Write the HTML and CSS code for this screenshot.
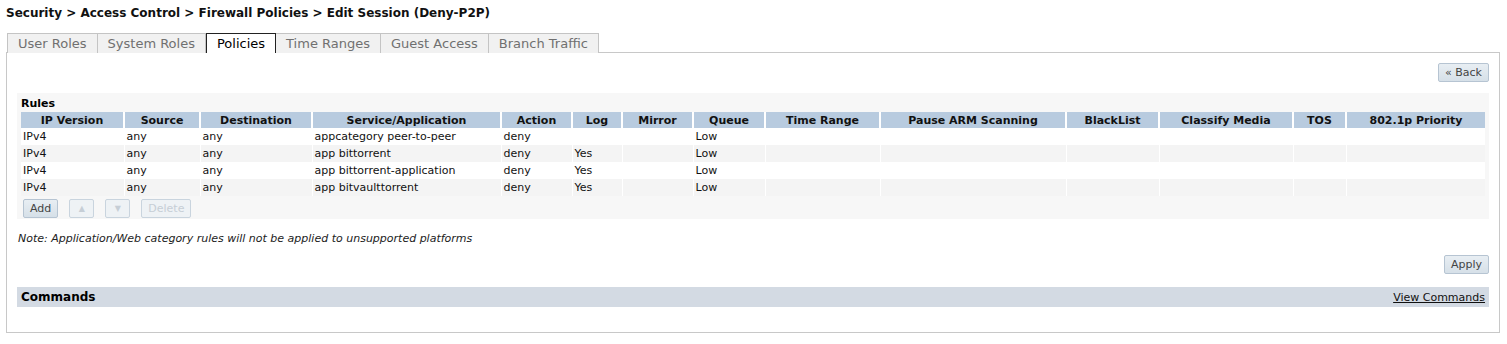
FILE: index.html
```html
<!DOCTYPE html>
<html lang="en">
<head>
  <meta charset="UTF-8">
  <title>Edit Session (Deny-P2P)</title>
  <link rel="stylesheet" href="styles.css">
</head>
<body>
  <h1 class="crumbs">Security &gt; Access Control &gt; Firewall Policies &gt; Edit Session (Deny-P2P)</h1>

  <div class="tabs">
    <div class="tab">User Roles</div>
    <div class="tab">System Roles</div>
    <div class="tab active">Policies</div>
    <div class="tab">Time Ranges</div>
    <div class="tab">Guest Access</div>
    <div class="tab">Branch Traffic</div>
  </div>

  <div class="panel">
    <div class="actions">
      <button class="btn">&laquo; Back</button>
    </div>

    <div class="rules">
      <h2>Rules</h2>
      <table class="grid">
        <colgroup>
          <col class="c-ip"><col class="c-src"><col class="c-dst"><col class="c-svc">
          <col class="c-act"><col class="c-log"><col class="c-mir"><col class="c-que">
          <col class="c-time"><col class="c-arm"><col class="c-bl"><col class="c-cm">
          <col class="c-tos"><col class="c-pri">
        </colgroup>
        <thead>
          <tr>
            <th>IP Version</th>
            <th>Source</th>
            <th>Destination</th>
            <th>Service/Application</th>
            <th>Action</th>
            <th>Log</th>
            <th>Mirror</th>
            <th>Queue</th>
            <th>Time Range</th>
            <th>Pause ARM Scanning</th>
            <th>BlackList</th>
            <th>Classify Media</th>
            <th>TOS</th>
            <th>802.1p Priority</th>
          </tr>
        </thead>
        <tbody>
          <tr>
            <td>IPv4</td><td>any</td><td>any</td><td>appcategory peer-to-peer</td><td>deny</td><td></td><td></td><td>Low</td><td></td><td></td><td></td><td></td><td></td><td></td>
          </tr>
          <tr>
            <td>IPv4</td><td>any</td><td>any</td><td>app bittorrent</td><td>deny</td><td>Yes</td><td></td><td>Low</td><td></td><td></td><td></td><td></td><td></td><td></td>
          </tr>
          <tr>
            <td>IPv4</td><td>any</td><td>any</td><td>app bittorrent-application</td><td>deny</td><td>Yes</td><td></td><td>Low</td><td></td><td></td><td></td><td></td><td></td><td></td>
          </tr>
          <tr>
            <td>IPv4</td><td>any</td><td>any</td><td>app bitvaulttorrent</td><td>deny</td><td>Yes</td><td></td><td>Low</td><td></td><td></td><td></td><td></td><td></td><td></td>
          </tr>
        </tbody>
      </table>
      <div class="row-buttons">
        <button class="btn">Add</button>
        <button class="btn disabled">&#9650;</button>
        <button class="btn disabled">&#9660;</button>
        <button class="btn disabled">Delete</button>
      </div>
    </div>

    <p class="note">Note: Application/Web category rules will not be applied to unsupported platforms</p>

    <div class="actions apply">
      <button class="btn">Apply</button>
    </div>

    <div class="commands">
      <span class="commands-title">Commands</span>
      <a class="commands-link">View Commands</a>
    </div>
  </div>
</body>
</html>
```

FILE: styles.css
```css
body {
  margin: 0;
  padding: 0 6px;
  font-family: "DejaVu Sans", Verdana, sans-serif;
  font-size: 11px;
  color: #000;
  background: #fff;
  width: 1494px;
}

.crumbs {
  font-size: 12px;
  font-weight: bold;
  margin: 0;
  padding-top: 5px;
  height: 28px;
  line-height: 16px;
  color: #111;
}

/* tabs */
.tabs {
  display: flex;
  padding-left: 1px;
  height: 20px;
}

.tab {
  height: 19px;
  line-height: 19px;
  padding: 0 10px;
  font-size: 13px;
  color: #707070;
  background: #f1f1f1;
  border: 1px solid #c4c4c4;
  border-left: none;
  border-bottom: none;
}

.tab:first-child {
  border-left: 1px solid #c4c4c4;
}

.tab.active {
  background: #fff;
  color: #000;
  border: 1px solid #222;
  border-bottom: none;
  position: relative;
  z-index: 1;
}

/* panel */
.panel {
  border: 1px solid #c8c8c8;
  height: 269px;
  padding: 10px 10px 0 10px;
  margin-top: -1px;
}

.actions {
  display: flex;
  justify-content: flex-end;
}

.btn {
  font-family: "DejaVu Sans", Verdana, sans-serif;
  font-size: 11px;
  color: #444;
  height: 19px;
  padding: 0 6px;
  border: 1px solid #b6c4d2;
  border-radius: 2px;
  background: linear-gradient(#e8eef3, #d6e0e8);
}

.btn.disabled {
  color: #c6ced6;
  border-color: #c9d4de;
  background: #eef2f5;
}

/* rules */
.rules {
  background: #f7f7f7;
  margin-top: 11px;
  padding: 3px 4px 3px 4px;
  height: 120px;
}

.rules h2 {
  font-size: 11px;
  font-weight: bold;
  margin: 0;
  line-height: 16px;
}

.grid {
  border-collapse: collapse;
  width: 1464px;
  table-layout: fixed;
}

.grid th {
  background: #b8cbdf;
  font-weight: bold;
  height: 16px;
  padding: 0;
  border-left: 2px solid #fff;
  color: #111;
  white-space: nowrap;
}

.grid th:first-child,
.grid td:first-child {
  border-left: none;
}

.grid td {
  height: 17px;
  padding: 0 0 0 2px;
  border-left: 1px solid #fff;
  background: #fff;
  white-space: nowrap;
  color: #111;
}

.grid tbody tr:nth-child(even) td {
  background: #f4f4f4;
}

.c-ip { width: 103px; }
.c-src { width: 76px; }
.c-dst { width: 112px; }
.c-svc { width: 189px; }
.c-act { width: 71px; }
.c-log { width: 50px; }
.c-mir { width: 71px; }
.c-que { width: 72px; }
.c-time { width: 115px; }
.c-arm { width: 186px; }
.c-bl { width: 93px; }
.c-cm { width: 134px; }
.c-tos { width: 53px; }
.c-pri { width: 139px; }

.row-buttons {
  display: flex;
  gap: 11px;
  padding: 3px 0 0 2px;
}

.row-buttons .btn:nth-child(2),
.row-buttons .btn:nth-child(3) {
  width: 25px;
  font-size: 8px;
}

.note {
  font-style: italic;
  margin: 13px 0 0 1px;
  line-height: 13px;
  color: #222;
}

.apply {
  margin-top: 10px;
}

.commands {
  display: flex;
  justify-content: space-between;
  align-items: center;
  background: #d3dae3;
  height: 20px;
  margin-top: 13px;
  padding: 0 4px;
}

.commands-title {
  font-size: 12px;
  font-weight: bold;
}

.commands-link {
  text-decoration: underline;
  color: #111;
}
```
